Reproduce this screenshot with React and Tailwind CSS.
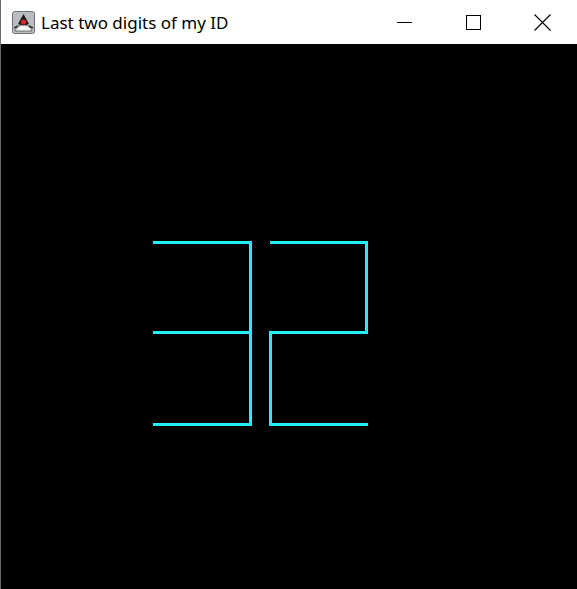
import React from 'react';

function JavaIcon() {
  return (
    <svg width="23" height="23" viewBox="0 0 23 23" aria-hidden>
      <rect x="0.5" y="0.5" width="22" height="22" rx="2" fill="#b9bcc0" stroke="#6d7278" />
      <path d="M3 20 C5 15 8 14 11.5 14 C15 14 18 15 20 20 Z" fill="#f4f4f4" stroke="#555" strokeWidth="0.8" />
      <path d="M11.5 3 L6 13 C8 14.5 15 14.5 17 13 Z" fill="#1a1a1a" />
      <circle cx="11.5" cy="11" r="2.6" fill="#e0272b" />
      <path d="M2 17 L6 15 M21 17 L17 15" stroke="#333" strokeWidth="1.4" />
    </svg>
  );
}

export default function App() {
  return (
    <div className="flex h-[589px] w-[577px] flex-col overflow-hidden border-l border-[#6b6b6b] bg-black">
      <div className="flex h-[44px] shrink-0 items-center bg-white">
        <div className="ml-[11px] flex items-center">
          <JavaIcon />
        </div>
        <span className="ml-[6px] text-[17px] leading-none text-black [font-family:'Noto_Sans',sans-serif]">
          Last two digits of my ID
        </span>
        <div className="ml-auto flex h-full">
          <div className="flex h-full w-[69px] items-center justify-center">
            <div className="h-px w-[15px] bg-black" />
          </div>
          <div className="flex h-full w-[69px] items-center justify-center">
            <div className="h-[15px] w-[15px] border border-black" />
          </div>
          <div className="flex h-full w-[69px] items-center justify-center">
            <svg width="17" height="17" viewBox="0 0 17 17" aria-hidden>
              <path d="M0.5 0.5 L16.5 16.5 M16.5 0.5 L0.5 16.5" stroke="#000" strokeWidth="1.1" />
            </svg>
          </div>
        </div>
      </div>
      <div className="flex-1">
        <svg width="576" height="545" viewBox="1 44 576 545" aria-hidden>
          <g fill="none" stroke="#22f0f6" strokeWidth="3" strokeLinejoin="miter" strokeLinecap="butt">
            <polyline points="153,242.5 250.5,242.5 250.5,424.5 153,424.5" />
            <line x1="153" y1="332.5" x2="250.5" y2="332.5" />
            <polyline points="270,242.5 366.5,242.5 366.5,332.5 270.5,332.5 270.5,424.5 368,424.5" />
          </g>
        </svg>
      </div>
    </div>
  );
}
